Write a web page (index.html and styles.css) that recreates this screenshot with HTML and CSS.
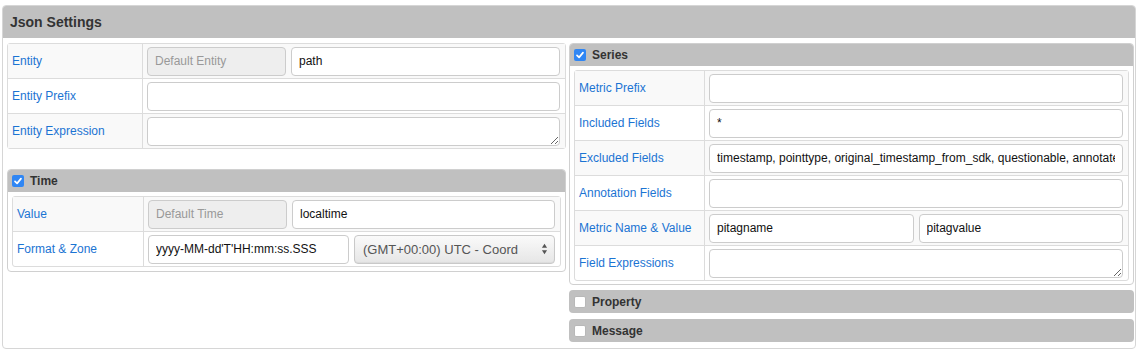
FILE: index.html
```html
<!DOCTYPE html>
<html lang="en">
<head>
    <meta charset="UTF-8">
    <title>Json Settings</title>
    <link rel="stylesheet" href="styles.css">
</head>
<body>
    <div class="panel">
        <div class="panel-heading">Json Settings</div>

        <div class="panel-body">
            <!-- left column: entity + time -->
            <div class="col col-left">
                <table class="grid entity-grid">
                    <tr>
                        <td class="label">Entity</td>
                        <td class="field">
                            <div class="pair">
                                <input class="input short" type="text" placeholder="Default Entity" disabled>
                                <input class="input" type="text" value="path">
                            </div>
                        </td>
                    </tr>
                    <tr>
                        <td class="label">Entity Prefix</td>
                        <td class="field"><input class="input" type="text"></td>
                    </tr>
                    <tr>
                        <td class="label">Entity Expression</td>
                        <td class="field"><textarea class="input area"></textarea></td>
                    </tr>
                </table>

                <div class="section time-section">
                    <div class="section-heading">
                        <span class="check on"><svg viewBox="0 0 12 12"><path d="M3 6.3 L5.1 8.4 L9 3.6" fill="none" stroke="#fff" stroke-width="1.7" stroke-linecap="round" stroke-linejoin="round"/></svg></span>
                        Time
                    </div>
                    <table class="grid time-grid">
                        <tr>
                            <td class="label">Value</td>
                            <td class="field">
                                <div class="pair">
                                    <input class="input short" type="text" placeholder="Default Time" disabled>
                                    <input class="input" type="text" value="localtime">
                                </div>
                            </td>
                        </tr>
                        <tr>
                            <td class="label">Format &amp; Zone</td>
                            <td class="field">
                                <div class="pair">
                                    <input class="input format" type="text" value="yyyy-MM-dd'T'HH:mm:ss.SSS">
                                    <div class="select">
                                        <span>(GMT+00:00) UTC - Coord</span>
                                        <svg class="arrows" viewBox="0 0 8 14"><path d="M4 1 L7 5.5 L1 5.5 Z M4 13 L7 8.5 L1 8.5 Z" fill="#555"/></svg>
                                    </div>
                                </div>
                            </td>
                        </tr>
                    </table>
                </div>
            </div>

            <!-- right column: series, property, message -->
            <div class="col col-right">
                <div class="section series-section">
                    <div class="section-heading">
                        <span class="check on"><svg viewBox="0 0 12 12"><path d="M3 6.3 L5.1 8.4 L9 3.6" fill="none" stroke="#fff" stroke-width="1.7" stroke-linecap="round" stroke-linejoin="round"/></svg></span>
                        Series
                    </div>
                    <table class="grid series-grid">
                        <tr>
                            <td class="label">Metric Prefix</td>
                            <td class="field"><input class="input" type="text"></td>
                        </tr>
                        <tr>
                            <td class="label">Included Fields</td>
                            <td class="field"><input class="input" type="text" value="*"></td>
                        </tr>
                        <tr>
                            <td class="label">Excluded Fields</td>
                            <td class="field"><input class="input" type="text" value="timestamp, pointtype, original_timestamp_from_sdk, questionable, annotated, valuequality"></td>
                        </tr>
                        <tr>
                            <td class="label">Annotation Fields</td>
                            <td class="field"><input class="input" type="text"></td>
                        </tr>
                        <tr>
                            <td class="label">Metric Name &amp; Value</td>
                            <td class="field">
                                <div class="pair even">
                                    <input class="input" type="text" value="pitagname">
                                    <input class="input" type="text" value="pitagvalue">
                                </div>
                            </td>
                        </tr>
                        <tr>
                            <td class="label">Field Expressions</td>
                            <td class="field"><textarea class="input area"></textarea></td>
                        </tr>
                    </table>
                </div>

                <div class="section collapsed property">
                    <div class="section-heading"><span class="check"></span>Property</div>
                </div>
                <div class="section collapsed">
                    <div class="section-heading"><span class="check"></span>Message</div>
                </div>
            </div>
        </div>
    </div>
</body>
</html>
```

FILE: styles.css
```css
body {
    margin: 0;
    background: #fff;
    font-family: "Liberation Sans", Arial, sans-serif;
    font-size: 12px;
    color: #222;
}

.panel {
    margin: 5px 4px 0 2px;
    border: 1px solid #d6d6d6;
    border-radius: 4px;
}

.panel-heading {
    height: 32px;
    line-height: 32px;
    padding-left: 7px;
    background: #c0c0c0;
    border-radius: 3px 3px 0 0;
    font-size: 14px;
    font-weight: 700;
    color: #333;
}

.panel-body {
    display: grid;
    grid-template-columns: 559px 565px;
    column-gap: 3px;
    align-items: start;
    padding: 5px 1px 6px 4px;
}

/* tables */

.grid {
    width: 100%;
    border-collapse: separate;
    border-spacing: 0;
    border: 1px solid #dcdcdc;
    border-radius: 3px;
}

.grid td {
    height: 34px;
    padding: 0;
    border-top: 1px solid #dcdcdc;
    vertical-align: middle;
}

.grid tr:first-child td {
    border-top: none;
}

.grid tr:nth-child(odd) td {
    background: #f9f9f9;
}

.grid td.label {
    border-right: 1px solid #dcdcdc;
    padding-left: 4px;
    color: #1b74d3;
}

.grid td.field {
    padding: 0 5px 0 4px;
}

.entity-grid td.label { width: 130px; }
.time-grid td.label { width: 126px; }
.series-grid td.label { width: 125px; }

.pair {
    display: flex;
    gap: 5px;
}

.pair .input {
    flex: 1;
    min-width: 0;
}

.pair .input.short {
    flex: 0 0 139px;
}

.pair .input.format {
    flex: 0 0 201px;
}

.pair.even .input {
    flex: 1 1 0;
}

.input {
    display: block;
    box-sizing: border-box;
    width: 100%;
    height: 29px;
    margin: 0;
    padding: 0 7px;
    border: 1px solid #cccccc;
    border-radius: 4px;
    background: #fff;
    font-family: "Liberation Sans", Arial, sans-serif;
    font-size: 12px;
    color: #111;
}

.input:disabled {
    background: #eeeeee;
    color: #999;
}

.input:disabled::placeholder {
    color: #999;
}

.area {
    resize: vertical;
    padding-top: 6px;
}

.select {
    flex: 1;
    display: flex;
    align-items: center;
    justify-content: space-between;
    box-sizing: border-box;
    height: 29px;
    padding: 0 6px 0 8px;
    border: 1px solid #c9c9c9;
    border-radius: 4px;
    background: linear-gradient(#fafafa, #e6e6e6);
    box-shadow: inset 0 -1px 1px rgba(0,0,0,0.05);
    font-size: 13px;
    color: #555;
    white-space: nowrap;
    overflow: hidden;
}

.select .arrows {
    width: 7px;
    height: 12px;
    flex: none;
}

/* collapsible sections */

.section {
    border: 1px solid #d0d0d0;
    border-radius: 4px;
    padding-bottom: 4px;
}

.series-section {
    padding-bottom: 3px;
}

.section .grid {
    width: calc(100% - 8px);
    margin: 4px 4px 0 4px;
}

.time-section {
    margin-top: 20px;
}

.section-heading {
    display: flex;
    align-items: center;
    height: 22px;
    padding-left: 4px;
    background: #c0c0c0;
    border-radius: 3px 3px 0 0;
    font-size: 12px;
    font-weight: 700;
    color: #333;
}

.section.collapsed {
    margin-top: 6px;
    border: none;
    padding: 0;
}

.section.collapsed.property {
    margin-top: 5px;
}

.section.collapsed .section-heading {
    height: 23px;
    border-radius: 4px;
    padding-left: 5px;
}

.check {
    display: inline-block;
    box-sizing: border-box;
    width: 12px;
    height: 12px;
    margin-right: 6px;
    border: 1px solid #b8b8b8;
    border-radius: 2px;
    background: #fff;
}

.check.on {
    border: none;
    background: #2f86f4;
}

.check svg {
    display: block;
    width: 12px;
    height: 12px;
}
```
